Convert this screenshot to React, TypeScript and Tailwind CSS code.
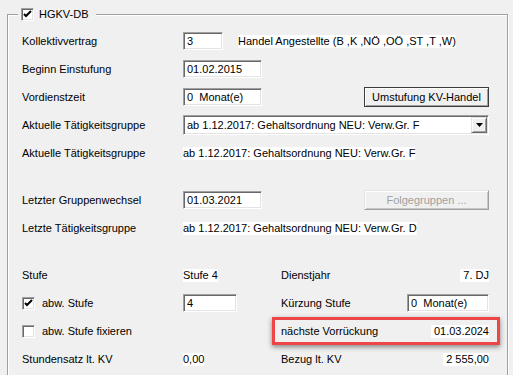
import type { ReactNode } from "react";

function CheckBox({ checked }: { checked?: boolean }) {
  return (
    <span className="flex h-[13px] w-[13px] shrink-0 items-center justify-center border border-t-[#a0a0a0] border-l-[#a0a0a0] border-r-white border-b-white bg-white shadow-[inset_1px_1px_0_#696969,inset_-1px_-1px_0_#e3e3e3]">
      {checked && (
        <svg width="9" height="9" viewBox="0 0 9 9">
          <path d="M1 4 L3 6 L8 1" fill="none" stroke="#000" strokeWidth="2" />
        </svg>
      )}
    </span>
  );
}

function Field({ className, children }: { className: string; children?: ReactNode }) {
  return (
    <div
      className={`flex h-[18px] shrink-0 items-center border border-t-[#a0a0a0] border-l-[#a0a0a0] border-r-white border-b-white bg-white pl-[3px] shadow-[inset_1px_1px_0_#696969,inset_-1px_-1px_0_#e3e3e3] ${className}`}
    >
      {children}
    </div>
  );
}

function Btn({ children, disabled }: { children: ReactNode; disabled?: boolean }) {
  return (
    <button
      type="button"
      className={
        disabled
          ? "ml-auto flex h-[20px] w-[125px] items-center justify-center border border-t-[#e3e3e3] border-l-[#e3e3e3] border-r-[#a0a0a0] border-b-[#a0a0a0] bg-[#f0f0f0] text-[#a0a0a0] shadow-[inset_1px_1px_0_#fff,inset_-1px_-1px_0_#c8c8c8]"
          : "ml-auto flex h-[20px] w-[125px] items-center justify-center border border-[#3c3c3c] bg-[#f0f0f0] shadow-[inset_1px_1px_0_#fff,inset_-1px_-1px_0_#a0a0a0]"
      }
    >
      {children}
    </button>
  );
}

function Row({ label, children }: { label: ReactNode; children?: ReactNode }) {
  return (
    <div className="flex h-[28px] w-[467px] items-center">
      <div className="w-[161px] shrink-0">{label}</div>
      {children}
    </div>
  );
}

function Static({ children, className = "" }: { children: ReactNode; className?: string }) {
  return <span className={`bg-white leading-[13px] ${className}`}>{children}</span>;
}

function SplitRow({
  left,
  leftValue,
  right,
  rightValue,
  marked,
}: {
  left: ReactNode;
  leftValue?: ReactNode;
  right: ReactNode;
  rightValue: ReactNode;
  marked?: boolean;
}) {
  return (
    <div className="flex h-[28px] items-center">
      <div className="flex w-[250px] shrink-0 items-center">
        <div className="w-[161px] shrink-0">{left}</div>
        {leftValue}
      </div>
      <div
        className={
          marked
            ? "flex h-[28px] w-[228px] items-center justify-between border-[3px] border-[#ee4646] pl-[6px] pr-[8px] shadow-[0_2px_5px_rgba(0,0,0,0.45)]"
            : "flex h-[28px] w-[228px] items-center justify-between pl-[9px] pr-[11px]"
        }
      >
        <span>{right}</span>
        {rightValue}
      </div>
    </div>
  );
}

export default function App() {
  return (
    <div className="h-[375px] w-[513px] overflow-hidden bg-[#f0f0f0] pl-[7px] pt-[14px] font-['Liberation_Sans',Arial,sans-serif] text-[11px] text-black">
      <div className="relative h-[400px] w-[501px] border border-[#a0a0a0] pl-[14px] pt-[12px] shadow-[inset_1px_1px_0_#fff,1px_1px_0_#fff]">
        <div className="absolute left-[10px] top-[-7px] flex items-center gap-[5px] bg-[#f0f0f0] pl-[3px] pr-[7px]">
          <CheckBox checked />
          <span className="leading-[13px]">HGKV-DB</span>
        </div>

        <Row label="Kollektivvertrag">
          <Field className="w-[40px]">3</Field>
          <Static className="ml-[15px]">Handel Angestellte (B ,K ,NÖ ,OÖ ,ST ,T ,W)</Static>
        </Row>
        <Row label="Beginn Einstufung">
          <Field className="w-[79px]">01.02.2015</Field>
        </Row>
        <Row label="Vordienstzeit">
          <Field className="w-[79px]">0&nbsp;&nbsp;Monat(e)</Field>
          <Btn>Umstufung KV-Handel</Btn>
        </Row>
        <Row label="Aktuelle Tätigkeitsgruppe">
          <div className="flex h-[20px] w-[306px] items-center justify-between border border-t-[#a0a0a0] border-l-[#a0a0a0] border-r-white border-b-white bg-white pl-[3px] pr-[1px] shadow-[inset_1px_1px_0_#696969,inset_-1px_-1px_0_#e3e3e3]">
            <span>ab 1.12.2017: Gehaltsordnung NEU: Verw.Gr. F</span>
            <span className="flex h-[16px] w-[16px] items-center justify-center border border-t-[#e3e3e3] border-l-[#e3e3e3] border-r-[#696969] border-b-[#696969] bg-[#f0f0f0] shadow-[inset_1px_1px_0_#fff,inset_-1px_-1px_0_#a0a0a0]">
              <svg width="7" height="4" viewBox="0 0 7 4">
                <path d="M0 0 H7 L3.5 4 Z" fill="#000" />
              </svg>
            </span>
          </div>
        </Row>
        <Row label="Aktuelle Tätigkeitsgruppe">
          <Static>ab 1.12.2017: Gehaltsordnung NEU: Verw.Gr. F</Static>
        </Row>

        <div className="h-[19px]" />

        <Row label="Letzter Gruppenwechsel">
          <Field className="w-[79px]">01.03.2021</Field>
          <Btn disabled>Folgegruppen ...</Btn>
        </Row>
        <Row label="Letzte Tätigkeitsgruppe">
          <Static>ab 1.12.2017: Gehaltsordnung NEU: Verw.Gr. D</Static>
        </Row>

        <div className="h-[19px]" />

        <SplitRow
          left="Stufe"
          leftValue={<Static>Stufe 4</Static>}
          right="Dienstjahr"
          rightValue={<Static className="pl-[3px]">7. DJ</Static>}
        />
        <SplitRow
          left={
            <div className="flex items-center gap-[7px]">
              <CheckBox checked />
              <span>abw. Stufe</span>
            </div>
          }
          leftValue={<Field className="w-[54px]">4</Field>}
          right="Kürzung Stufe"
          rightValue={<Field className="w-[82px]">0&nbsp;&nbsp;Monat(e)</Field>}
        />
        <SplitRow
          left={
            <div className="flex items-center gap-[7px]">
              <CheckBox />
              <span>abw. Stufe fixieren</span>
            </div>
          }
          right="nächste Vorrückung"
          rightValue={<Static className="pl-[3px]">01.03.2024</Static>}
          marked
        />
        <SplitRow
          left="Stundensatz lt. KV"
          leftValue={<Static>0,00</Static>}
          right="Bezug lt. KV"
          rightValue={<Static className="pl-[3px]">2 555,00</Static>}
        />
      </div>
    </div>
  );
}
